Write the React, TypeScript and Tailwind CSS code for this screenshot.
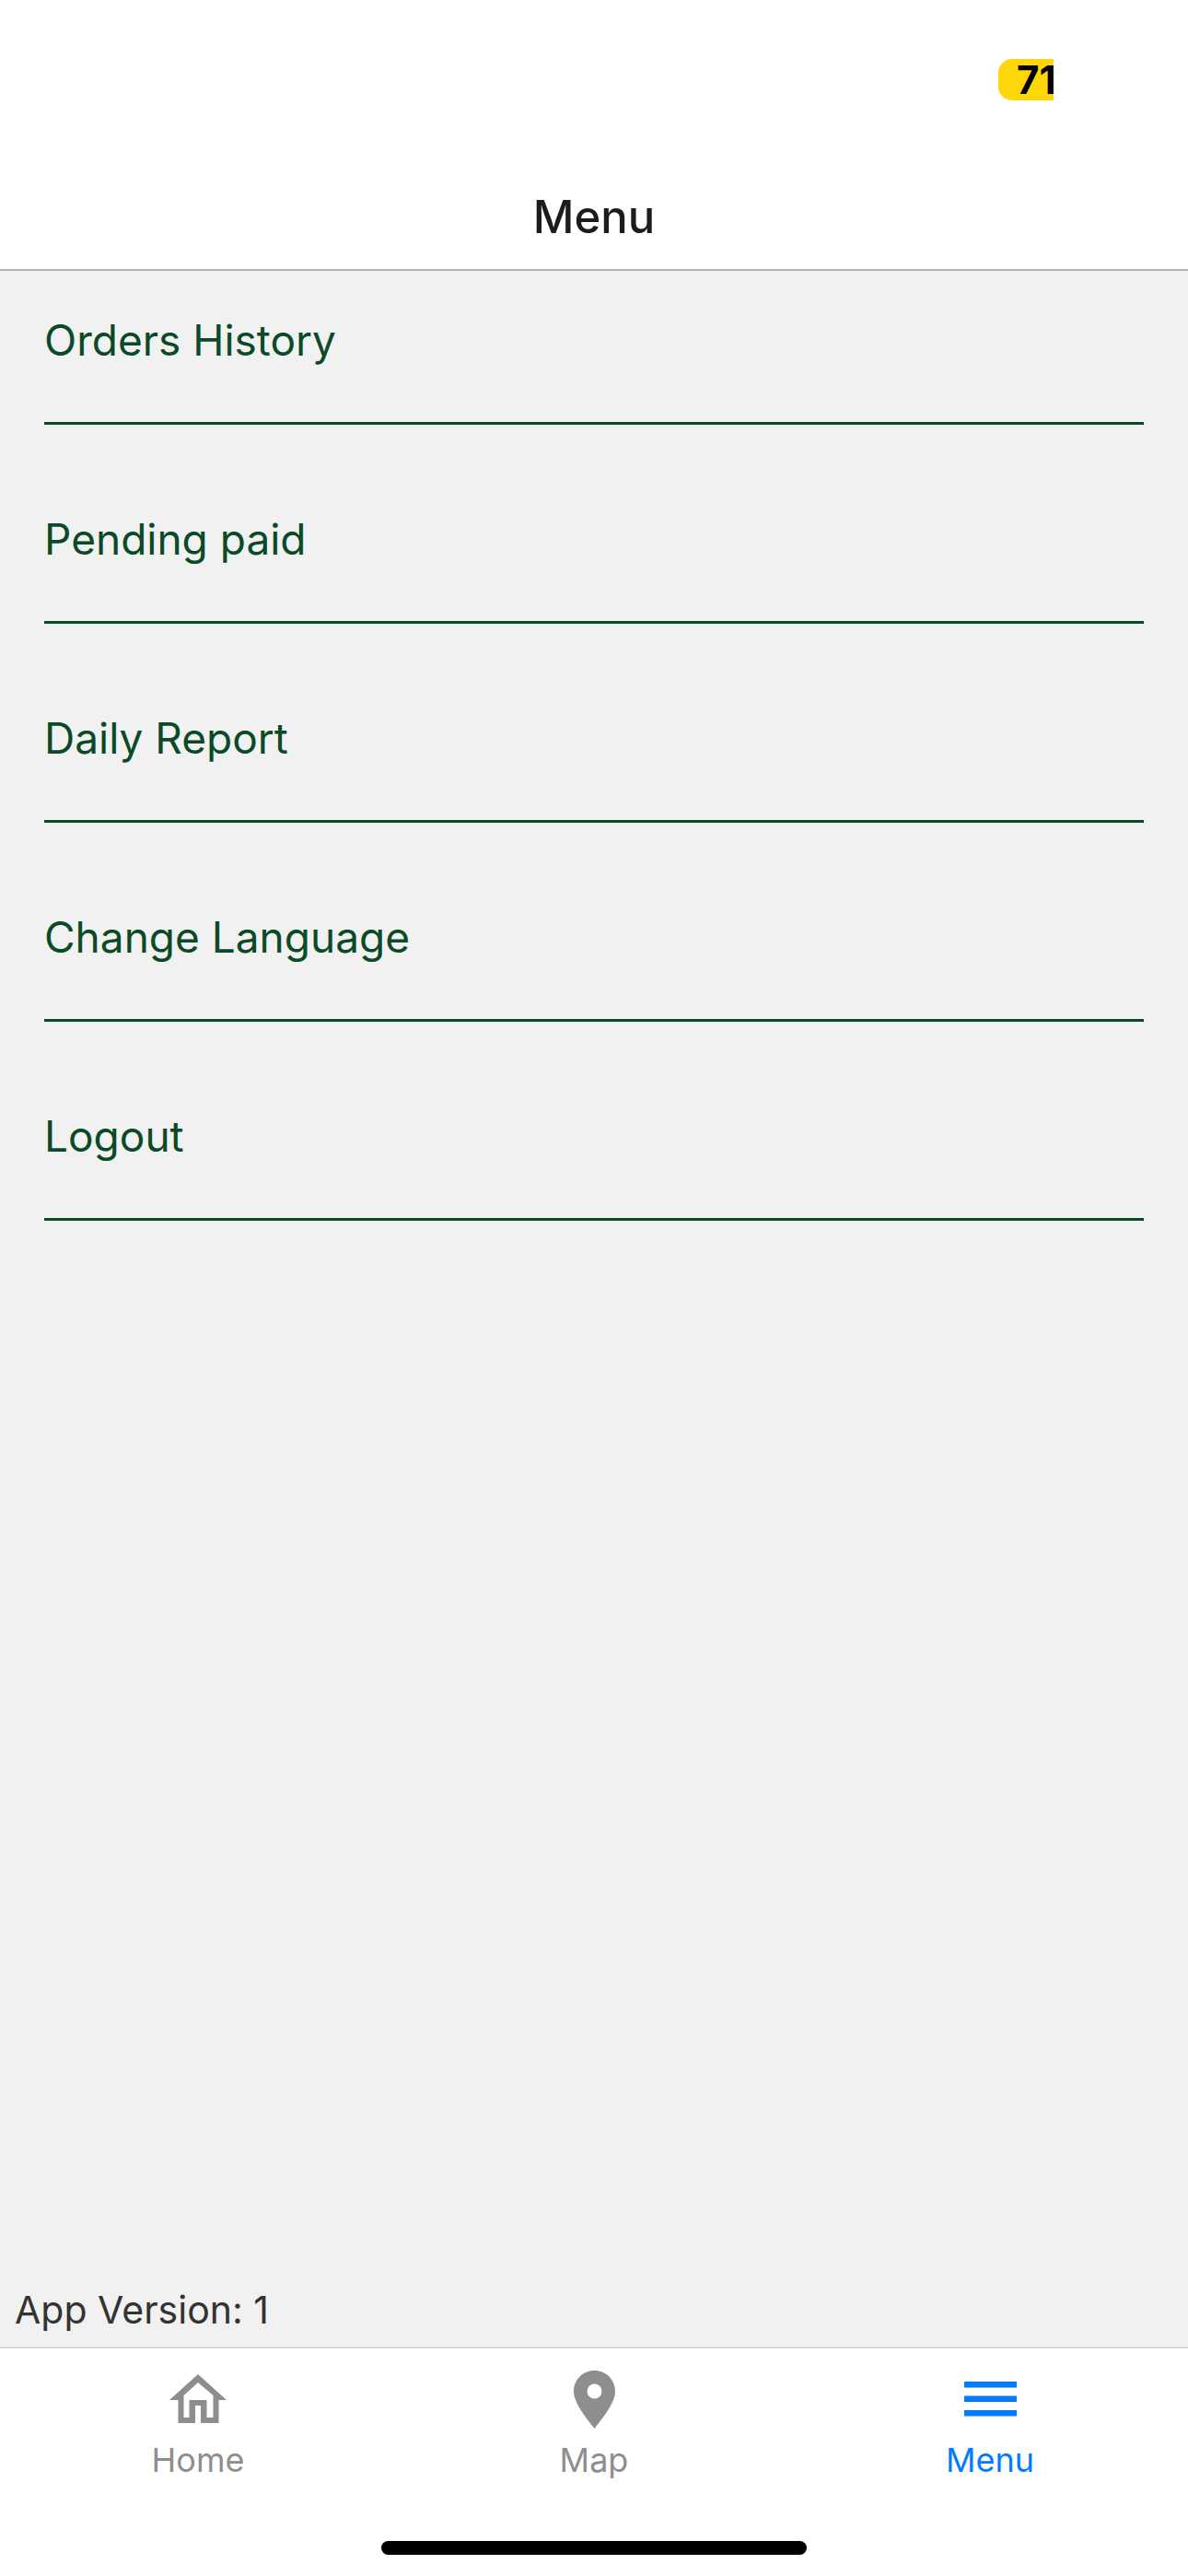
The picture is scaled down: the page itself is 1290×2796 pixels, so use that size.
const rows = ["Orders History", "Pending paid", "Daily Report", "Change Language", "Logout"];

function HomeIcon() {
  return (
    <svg width="62" height="54" viewBox="0 0 62 54" fill="#8e8e8f">
      <path
        fillRule="evenodd"
        d="M31 0 L62 28 L53.5 28 V53 H34 V34 H28 V53 H9.5 V28 H0 Z M31 9 L15.5 23 V47 H21.5 V28 H40.5 V47 H47.5 V23 Z"
      />
    </svg>
  );
}

function PinIcon() {
  return (
    <svg width="45" height="63" viewBox="0 0 45 63" fill="#8e8e8f">
      <path
        fillRule="evenodd"
        d="M22.5 0 C35 0 45 10 45 22.5 C45 36 30 53 22.5 63 C15 53 0 36 0 22.5 C0 10 10 0 22.5 0 Z M22.5 14.5 A8 8 0 1 0 22.5 30.5 A8 8 0 1 0 22.5 14.5 Z"
      />
    </svg>
  );
}

function BarsIcon() {
  return (
    <svg width="57" height="38" viewBox="0 0 57 38" fill="#007aff">
      <rect x="0" y="0" width="57" height="6.5" />
      <rect x="0" y="15.5" width="57" height="6.5" />
      <rect x="0" y="31" width="57" height="6.5" />
    </svg>
  );
}

function Tab({ label, active, children }: { label: string; active?: boolean; children: React.ReactNode }) {
  return (
    <div className="flex flex-1 flex-col items-center">
      <div className="flex h-[66px] items-center justify-center">{children}</div>
      <span className={`mt-[11px] text-[36px] leading-[44px] ${active ? "text-[#007aff]" : "text-[#8e8e8f]"}`}>{label}</span>
    </div>
  );
}

export default function App() {
  return (
    <div className="flex h-[2796px] w-[1290px] flex-col overflow-hidden bg-white font-['Inter','Liberation_Sans',sans-serif]">
      <header className="flex h-[294px] shrink-0 flex-col border-b-[2px] border-[#b4b4b4] bg-white">
        <div className="flex justify-end pt-[64px] pr-[146px]">
          <div className="h-[45px] w-[60px] overflow-hidden rounded-l-[15px] bg-[#ffd60a] pl-[20px]">
            <span className="text-[42px] leading-[45px] font-bold whitespace-nowrap text-black">71</span>
          </div>
        </div>
        <h1 className="mt-[97px] text-center text-[49px] leading-[60px] font-medium text-[#1c1c1e]">Menu</h1>
      </header>

      <main className="flex min-h-0 flex-1 flex-col bg-[#f1f1f1]">
        <div className="flex-1">
          {rows.map((row) => (
            <div key={row} className="mx-[48px] mb-[49px] h-[167px] border-b-[3px] border-[#0b4a26] pt-[46px]">
              <span className="text-[46px] leading-[58px] text-[#0b4a26]">{row}</span>
            </div>
          ))}
        </div>
        <p className="pb-[16px] pl-[16px] text-[41px] leading-[48px] text-[#333333]">App Version: 1</p>
      </main>

      <footer className="h-[249px] shrink-0 border-t-[2px] border-[#d8d8d8] bg-white">
        <nav className="flex pt-[22px]">
          <Tab label="Home">
            <HomeIcon />
          </Tab>
          <Tab label="Map">
            <PinIcon />
          </Tab>
          <Tab label="Menu" active>
            <BarsIcon />
          </Tab>
        </nav>
        <div className="mx-auto mt-[66px] h-[15px] w-[462px] rounded-full bg-black" />
      </footer>
    </div>
  );
}
